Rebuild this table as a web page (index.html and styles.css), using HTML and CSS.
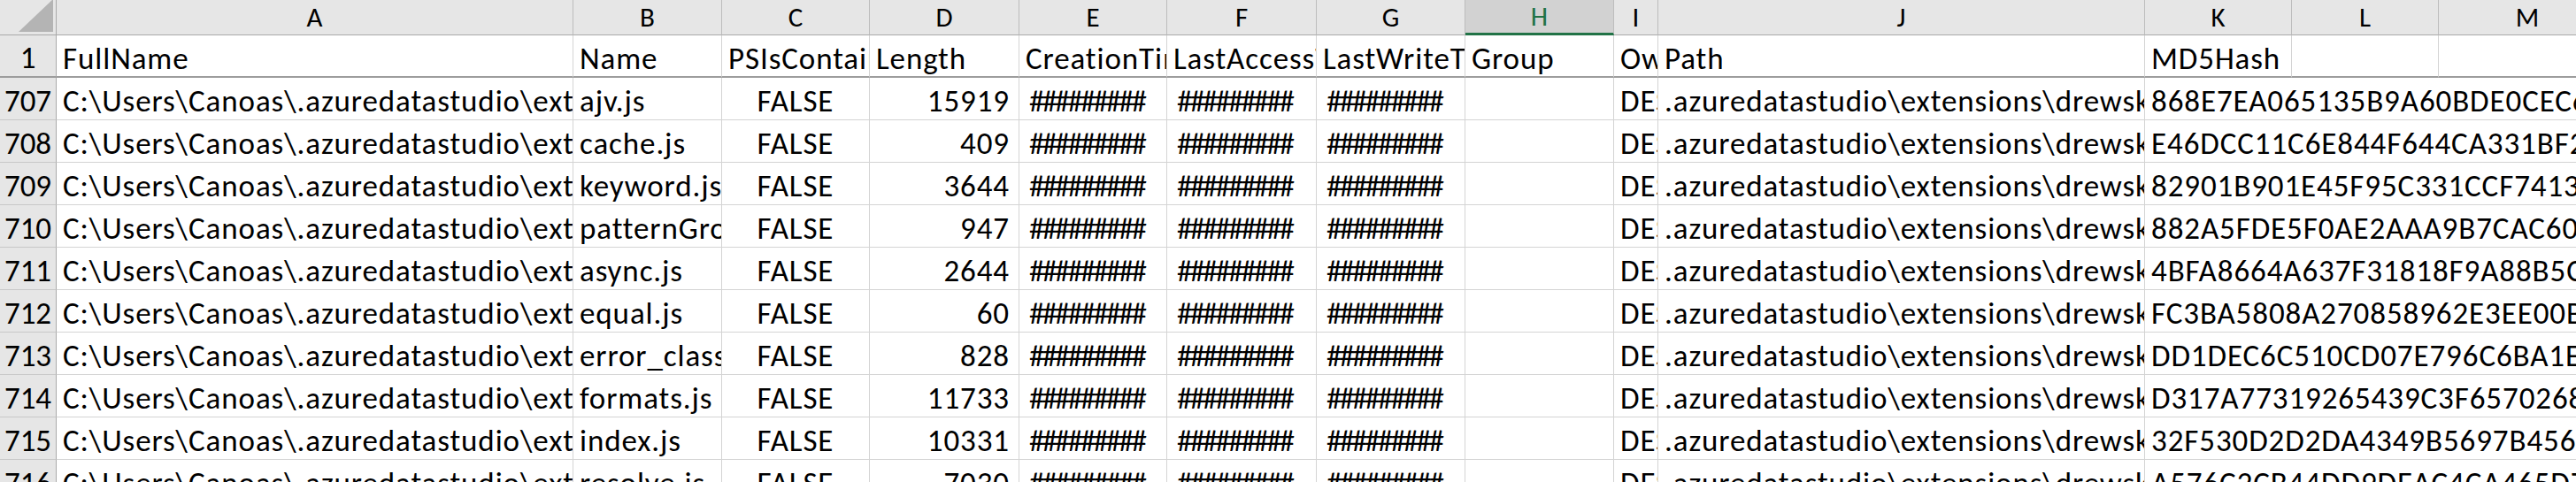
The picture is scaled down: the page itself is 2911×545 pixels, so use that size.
FILE: index.html
```html
<!DOCTYPE html>
<html lang="en">
<head>
<meta charset="utf-8">
<title>Sheet</title>
<link rel="stylesheet" href="styles.css">
</head>
<body>
<div class="sheet">
  <div class="row colhead">
    <div class="corner"><span class="tri"></span></div>
    <div class="ch">A</div><div class="ch">B</div><div class="ch">C</div><div class="ch">D</div>
    <div class="ch">E</div><div class="ch">F</div><div class="ch">G</div><div class="ch sel">H</div>
    <div class="ch">I</div><div class="ch">J</div><div class="ch">K</div><div class="ch">L</div><div class="ch last">M</div>
  </div>
  <div class="row first">
    <div class="rh">1</div>
    <div class="c">FullName</div><div class="c">Name</div><div class="c">PSIsContainer</div><div class="c">Length</div>
    <div class="c">CreationTime</div><div class="c">LastAccessTime</div><div class="c">LastWriteTime</div><div class="c">Group</div>
    <div class="c">Owner</div><div class="c">Path</div><div class="c">MD5Hash</div><div class="c"></div><div class="c last"></div>
  </div>
  <div class="row"><div class="rh">707</div><div class="c">C:\Users\Canoas\.azuredatastudio\extensions</div><div class="c">ajv.js</div><div class="c ctr">FALSE</div><div class="c num">15919</div><div class="c hash">#########</div><div class="c hash">#########</div><div class="c hash">#########</div><div class="c"></div><div class="c">DESKTOP\Canoas</div><div class="c">.azuredatastudio\extensions\drewsk.sql</div><div class="c spill">868E7EA065135B9A60BDE0CEC6A41F2D</div></div>
  <div class="row"><div class="rh">708</div><div class="c">C:\Users\Canoas\.azuredatastudio\extensions</div><div class="c">cache.js</div><div class="c ctr">FALSE</div><div class="c num">409</div><div class="c hash">#########</div><div class="c hash">#########</div><div class="c hash">#########</div><div class="c"></div><div class="c">DESKTOP\Canoas</div><div class="c">.azuredatastudio\extensions\drewsk.sql</div><div class="c spill">E46DCC11C6E844F644CA331BF2E07A91</div></div>
  <div class="row"><div class="rh">709</div><div class="c">C:\Users\Canoas\.azuredatastudio\extensions</div><div class="c">keyword.js</div><div class="c ctr">FALSE</div><div class="c num">3644</div><div class="c hash">#########</div><div class="c hash">#########</div><div class="c hash">#########</div><div class="c"></div><div class="c">DESKTOP\Canoas</div><div class="c">.azuredatastudio\extensions\drewsk.sql</div><div class="c spill">82901B901E45F95C331CCF74135D0A2E</div></div>
  <div class="row"><div class="rh">710</div><div class="c">C:\Users\Canoas\.azuredatastudio\extensions</div><div class="c">patternGroups.js</div><div class="c ctr">FALSE</div><div class="c num">947</div><div class="c hash">#########</div><div class="c hash">#########</div><div class="c hash">#########</div><div class="c"></div><div class="c">DESKTOP\Canoas</div><div class="c">.azuredatastudio\extensions\drewsk.sql</div><div class="c spill">882A5FDE5F0AE2AAA9B7CAC60D41E8B3</div></div>
  <div class="row"><div class="rh">711</div><div class="c">C:\Users\Canoas\.azuredatastudio\extensions</div><div class="c">async.js</div><div class="c ctr">FALSE</div><div class="c num">2644</div><div class="c hash">#########</div><div class="c hash">#########</div><div class="c hash">#########</div><div class="c"></div><div class="c">DESKTOP\Canoas</div><div class="c">.azuredatastudio\extensions\drewsk.sql</div><div class="c spill">4BFA8664A637F31818F9A88B5C02E7D4</div></div>
  <div class="row"><div class="rh">712</div><div class="c">C:\Users\Canoas\.azuredatastudio\extensions</div><div class="c">equal.js</div><div class="c ctr">FALSE</div><div class="c num">60</div><div class="c hash">#########</div><div class="c hash">#########</div><div class="c hash">#########</div><div class="c"></div><div class="c">DESKTOP\Canoas</div><div class="c">.azuredatastudio\extensions\drewsk.sql</div><div class="c spill">FC3BA5808A270858962E3EE00B61D3F7</div></div>
  <div class="row"><div class="rh">713</div><div class="c">C:\Users\Canoas\.azuredatastudio\extensions</div><div class="c">error_classes.js</div><div class="c ctr">FALSE</div><div class="c num">828</div><div class="c hash">#########</div><div class="c hash">#########</div><div class="c hash">#########</div><div class="c"></div><div class="c">DESKTOP\Canoas</div><div class="c">.azuredatastudio\extensions\drewsk.sql</div><div class="c spill">DD1DEC6C510CD07E796C6BA1E4F0293C</div></div>
  <div class="row"><div class="rh">714</div><div class="c">C:\Users\Canoas\.azuredatastudio\extensions</div><div class="c">formats.js</div><div class="c ctr">FALSE</div><div class="c num">11733</div><div class="c hash">#########</div><div class="c hash">#########</div><div class="c hash">#########</div><div class="c"></div><div class="c">DESKTOP\Canoas</div><div class="c">.azuredatastudio\extensions\drewsk.sql</div><div class="c spill">D317A77319265439C3F6570268BE14A0</div></div>
  <div class="row"><div class="rh">715</div><div class="c">C:\Users\Canoas\.azuredatastudio\extensions</div><div class="c">index.js</div><div class="c ctr">FALSE</div><div class="c num">10331</div><div class="c hash">#########</div><div class="c hash">#########</div><div class="c hash">#########</div><div class="c"></div><div class="c">DESKTOP\Canoas</div><div class="c">.azuredatastudio\extensions\drewsk.sql</div><div class="c spill">32F530D2D2DA4349B5697B4561C08E9F</div></div>
  <div class="row"><div class="rh">716</div><div class="c">C:\Users\Canoas\.azuredatastudio\extensions</div><div class="c">resolve.js</div><div class="c ctr">FALSE</div><div class="c num">7030</div><div class="c hash">#########</div><div class="c hash">#########</div><div class="c hash">#########</div><div class="c"></div><div class="c">DESKTOP\Canoas</div><div class="c">.azuredatastudio\extensions\drewsk.sql</div><div class="c spill">A576C2CB44DD9DEAC4CA465D7F13B02C</div></div>
</div>
</body>
</html>
```

FILE: styles.css
```css
html, body {
  margin: 0;
  padding: 0;
  background: #ffffff;
  overflow: hidden;
}
.sheet {
  width: 2911px;
  height: 545px;
  overflow: hidden;
  font-family: Carlito, Lato, "Liberation Sans", sans-serif;
  color: #000;
}
.row {
  display: grid;
  grid-template-columns: 64px 584px 168px 167px 169px 167px 169px 168px 168px 50px 550px 166px 166px 200px;
  height: 48px;
}
.colhead {
  height: 40px;
  background: #e6e6e6;
}
.corner {
  position: relative;
  box-sizing: border-box;
  border-right: 1px solid #a9a9a9;
  border-bottom: 1px solid #a9a9a9;
}
.tri {
  position: absolute;
  right: 3px;
  bottom: 3px;
  width: 0;
  height: 0;
  border-left: 39px solid transparent;
  border-bottom: 37px solid #b4b4b4;
}
.ch {
  box-sizing: border-box;
  border-right: 1px solid #bdbdbd;
  border-bottom: 1px solid #a9a9a9;
  display: flex;
  align-items: center;
  justify-content: center;
  font-size: 31px;
  line-height: 1;
}
.ch.sel {
  background: #d2d2d2;
  color: #217346;
  border-bottom: 3px solid #217346;
}
.rh {
  box-sizing: border-box;
  background: #e6e6e6;
  border-right: 1px solid #a9a9a9;
  border-bottom: 1px solid #c8c8c8;
  display: flex;
  align-items: flex-end;
  justify-content: center;
  font-size: 35px;
  line-height: 1;
  padding-bottom: 3px;
}
.c {
  box-sizing: border-box;
  border-right: 1px solid #d4d4d4;
  border-bottom: 1px solid #d4d4d4;
  padding: 0 7px 3px 7px;
  display: flex;
  align-items: flex-end;
  overflow: hidden;
  white-space: nowrap;
  font-size: 35px;
  line-height: 1;
  letter-spacing: 0.9px;
}
.first .c, .first .rh {
  border-bottom: 2px solid #9d9d9d;
}
.first .c {
  padding-bottom: 2px;
}
.ctr { justify-content: center; }
.num { justify-content: flex-end; padding-right: 10px; }
.hash { padding-left: 11px; letter-spacing: -3px; }
.spill { grid-column: span 3; }
.last { border-right: none; }
```
